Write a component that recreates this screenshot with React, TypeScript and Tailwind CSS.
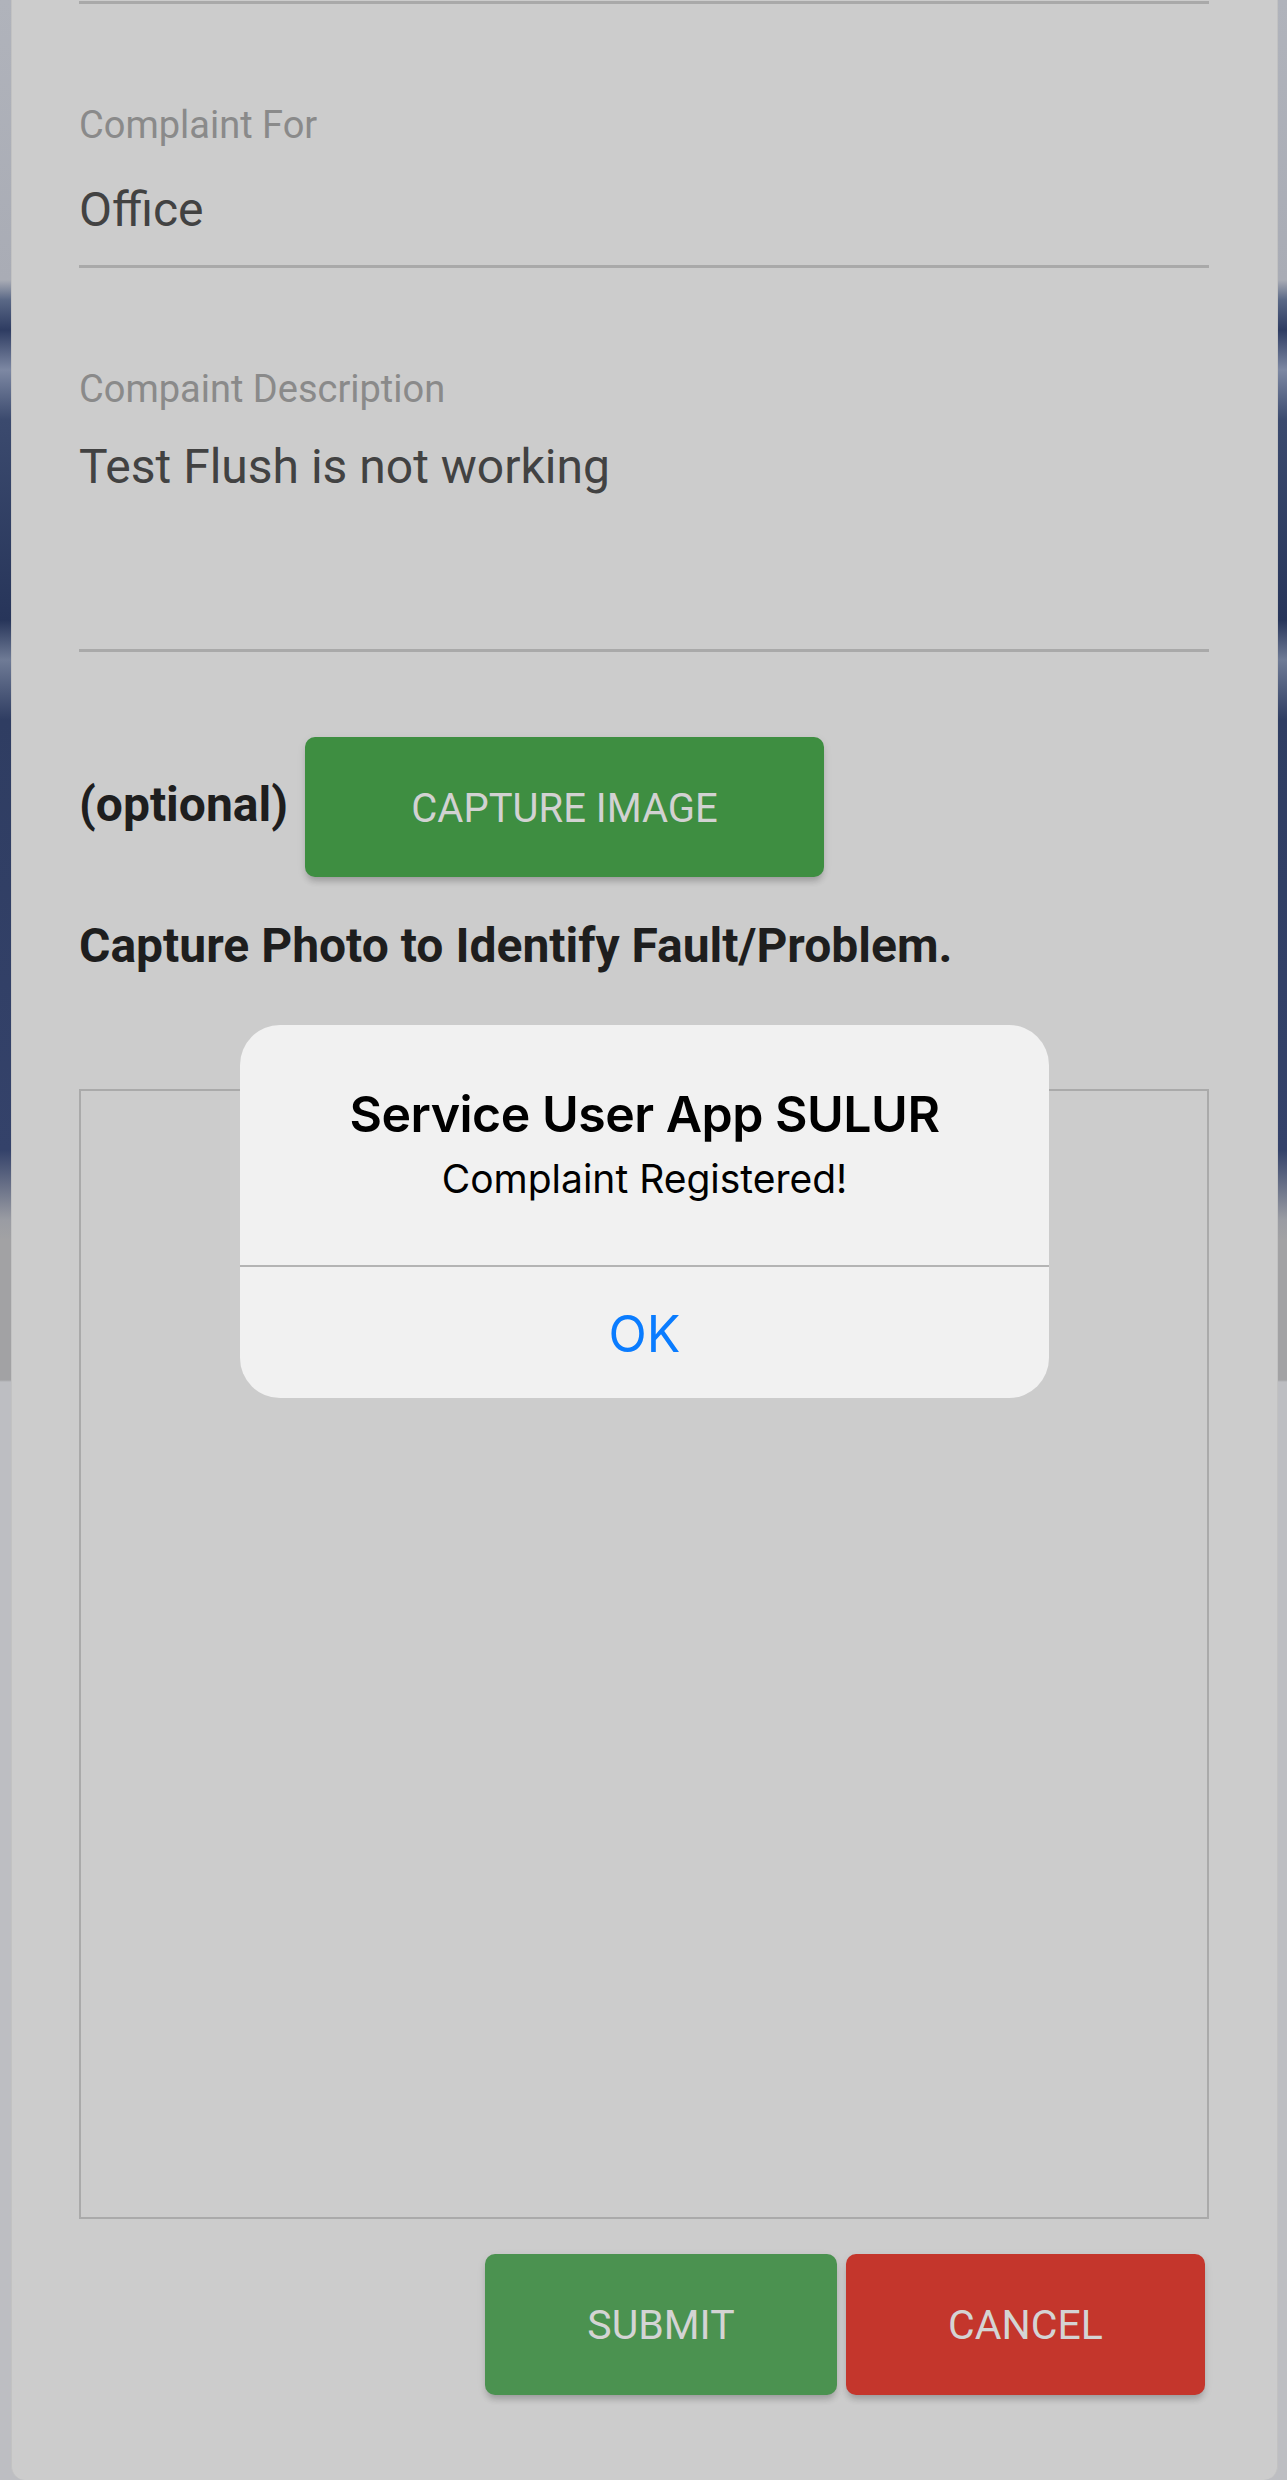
import React from "react"

const stripBg =
  "bg-[linear-gradient(to_bottom,#b0b3bb_0px,#a9acb5_280px,#5a6886_300px,#2e3c62_330px,#7d88a3_370px,#3b4a6e_420px,#27355a_620px,#6f7b96_660px,#2f3d62_720px,#34426a_1150px,#9a9ca3_1220px,#a2a2a4_1240px,#a2a2a4_1380px,#bdbec2_1382px,#bdbec2_100%)]"

const Alert: React.FC = () => {
  return (
    <div className="absolute left-[240px] top-[1025px] w-[809px] h-[373px] rounded-[40px] bg-[#f1f1f1] flex flex-col overflow-hidden font-['Inter',sans-serif]">
      <div className="h-[240px] flex flex-col items-center pt-[59px]">
        <div className="text-[50px] leading-[60px] font-semibold text-black tracking-[-0.01em]">Service User App SULUR</div>
        <div className="mt-[11px] text-[39px] leading-[48px] text-black">Complaint Registered!</div>
      </div>
      <div className="h-[2px] bg-[#b4b4b4]" />
      <div className="flex-1 flex items-center justify-center pt-[4px] text-[50px] text-[#0a7cff]">OK</div>
    </div>
  )
}

const App: React.FC = () => {
  return (
    <div className="relative w-[1287px] h-[2480px] flex flex-row overflow-hidden bg-[#bdbec2] font-['Roboto',sans-serif]">
      <div className={`w-[11px] h-full ${stripBg}`} />

      <div className="flex-1 h-full bg-[#cccccc] rounded-b-[14px] border-l border-r border-[#c2c2c2] pl-[67px] pr-[68px] flex flex-col">
        {/* end of the field above */}
        <div className="mt-[1px] h-[3px] bg-[#a9a9a9]" />

        {/* Complaint For */}
        <div className="mt-[100px] text-[38px] leading-[42px] text-[#8a8a8a]">Complaint For</div>
        <div className="mt-[36px] text-[48px] leading-[56px] text-[#424242]">Office</div>
        <div className="mt-[27px] h-[3px] bg-[#a9a9a9]" />

        {/* Description */}
        <div className="mt-[100px] text-[38px] leading-[42px] text-[#8a8a8a]">Compaint Description</div>
        <div className="mt-[29px] text-[48px] leading-[56px] text-[#424242]">Test Flush is not working</div>
        <div className="mt-[154px] h-[3px] bg-[#a9a9a9]" />

        {/* capture */}
        <div className="mt-[85px] flex flex-row items-center gap-[17px]">
          <span className="-mt-[4px] text-[48px] leading-[56px] font-bold text-[#1e1e1e]">(optional)</span>
          <button className="w-[519px] h-[140px] rounded-[10px] bg-[#3e8e41] text-[#d2d2d2] text-[40px] pt-[4px] shadow-[0_6px_6px_-2px_rgba(0,0,0,0.18),0_3px_10px_rgba(0,0,0,0.08)]">
            CAPTURE IMAGE
          </button>
        </div>

        <div className="mt-[41px] text-[48px] leading-[56px] font-bold text-[#1e1e1e]">
          Capture Photo to Identify Fault/Problem.
        </div>

        {/* image preview area */}
        <div className="mt-[115px] h-[1130px] border-2 border-[#aaaaaa]" />

        <div className="mt-[35px] flex flex-row justify-end gap-[9px] pr-[4px]">
          <button className="w-[352px] h-[141px] rounded-[10px] bg-[#4b9250] text-[#d4d4d4] text-[41px] pt-[2px] shadow-[0_6px_6px_-2px_rgba(0,0,0,0.18),0_3px_10px_rgba(0,0,0,0.08)]">
            SUBMIT
          </button>
          <button className="w-[359px] h-[141px] rounded-[10px] bg-[#c4362c] text-[#d4d4d4] text-[41px] pt-[2px] shadow-[0_6px_6px_-2px_rgba(0,0,0,0.18),0_3px_10px_rgba(0,0,0,0.08)]">
            CANCEL
          </button>
        </div>
      </div>

      <div className={`w-[9px] h-full ${stripBg}`} />

      <Alert />
    </div>
  )
}

export default App
